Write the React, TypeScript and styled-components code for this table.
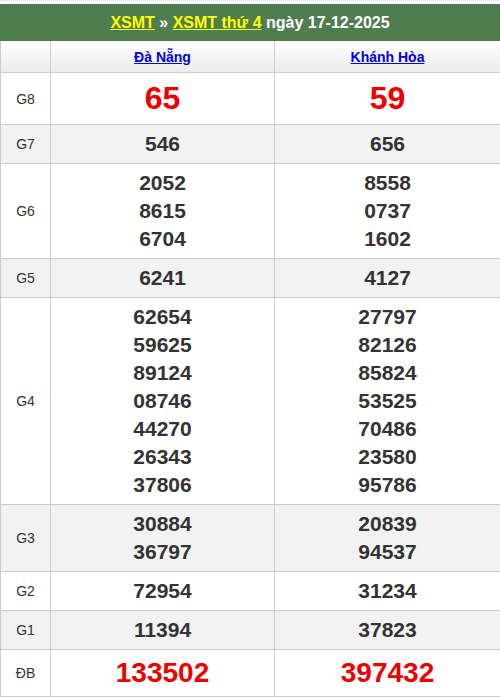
import React from "react";
import styled, { createGlobalStyle } from "styled-components";

const Global = createGlobalStyle`
  html, body { margin: 0; padding: 0; background: #fff; }
  body { font-family: "Liberation Sans", Arial, sans-serif; }
`;

const Wrap = styled.div`
  width: 500px;
  padding-top: 3px;
  border-top: 1px dotted #d8d8d8;
  box-sizing: border-box;
`;

const Title = styled.div`
  background: #507d4f;
  color: #fff;
  font-weight: bold;
  font-size: 16px;
  text-align: center;
  height: 37px;
  line-height: 37px;
`;

const TitleLink = styled.a`
  color: #ffff00;
  text-decoration: underline;
`;

const Table = styled.table`
  width: 500px;
  border-collapse: collapse;
  table-layout: fixed;
`;

const HeadCell = styled.th`
  border: 1px solid #ccc;
  border-top: none;
  height: 31px;
  padding: 0;
  background: linear-gradient(#ffffff, #ececec);
  font-size: 14px;
  font-weight: bold;
  text-align: center;
`;

const ProvLink = styled.a`
  color: #0000ee;
  text-decoration: underline;
`;

const Row = styled.tr<{ $alt?: boolean }>`
  background: ${(p) => (p.$alt ? "#f2f2f2" : "#fff")};
`;

const Label = styled.td`
  border: 1px solid #ccc;
  text-align: center;
  font-size: 14px;
  color: #333;
  padding: 0;
`;

const NumCell = styled.td<{ $size: "big" | "special" | "normal" }>`
  border: 1px solid #ccc;
  text-align: center;
  padding: 5px 0;
  font-weight: bold;
  color: ${(p) => (p.$size === "normal" ? "#333" : "#ee0000")};
  font-size: ${(p) => (p.$size === "big" ? "32px" : p.$size === "special" ? "28px" : "21px")};
  line-height: ${(p) => (p.$size === "big" ? "41px" : p.$size === "special" ? "36px" : "28px")};
`;

const Num = styled.div``;

type Prize = { label: string; a: string[]; b: string[]; size: "big" | "special" | "normal" };

const prizes: Prize[] = [
  { label: "G8", a: ["65"], b: ["59"], size: "big" },
  { label: "G7", a: ["546"], b: ["656"], size: "normal" },
  { label: "G6", a: ["2052", "8615", "6704"], b: ["8558", "0737", "1602"], size: "normal" },
  { label: "G5", a: ["6241"], b: ["4127"], size: "normal" },
  {
    label: "G4",
    a: ["62654", "59625", "89124", "08746", "44270", "26343", "37806"],
    b: ["27797", "82126", "85824", "53525", "70486", "23580", "95786"],
    size: "normal",
  },
  { label: "G3", a: ["30884", "36797"], b: ["20839", "94537"], size: "normal" },
  { label: "G2", a: ["72954"], b: ["31234"], size: "normal" },
  { label: "G1", a: ["11394"], b: ["37823"], size: "normal" },
  { label: "ĐB", a: ["133502"], b: ["397432"], size: "special" },
];

export default function App() {
  return (
    <Wrap>
      <Global />
      <Title>
        <TitleLink href="#">XSMT</TitleLink> » <TitleLink href="#">XSMT thứ 4</TitleLink> ngày 17-12-2025
      </Title>
      <Table>
        <colgroup>
          <col style={{ width: 50 }} />
          <col style={{ width: 224 }} />
          <col style={{ width: 226 }} />
        </colgroup>
        <thead>
          <tr>
            <HeadCell />
            <HeadCell>
              <ProvLink href="#">Đà Nẵng</ProvLink>
            </HeadCell>
            <HeadCell>
              <ProvLink href="#">Khánh Hòa</ProvLink>
            </HeadCell>
          </tr>
        </thead>
        <tbody>
          {prizes.map((p, i) => (
            <Row key={p.label} $alt={i % 2 === 1}>
              <Label>{p.label}</Label>
              <NumCell $size={p.size}>
                {p.a.map((n, j) => (
                  <Num key={j}>{n}</Num>
                ))}
              </NumCell>
              <NumCell $size={p.size}>
                {p.b.map((n, j) => (
                  <Num key={j}>{n}</Num>
                ))}
              </NumCell>
            </Row>
          ))}
        </tbody>
      </Table>
    </Wrap>
  );
}
